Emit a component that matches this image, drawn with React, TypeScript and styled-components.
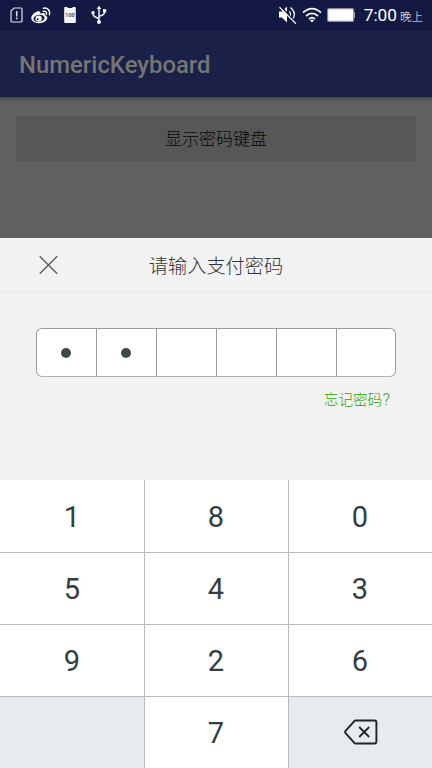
import React from "react";
import styled, { createGlobalStyle } from "styled-components";

const GlobalStyle = createGlobalStyle`
  *, *::before, *::after { box-sizing: border-box; }
  html, body, #root { height: 100%; }
  body {
    margin: 0;
    overflow: hidden;
    font-family: Roboto, "Noto Sans CJK SC", sans-serif;
  }
  button { font-family: inherit; padding: 0; border: 0; background: none; }
`;

const Screen = styled.div`
  width: 432px;
  height: 768px;
  display: flex;
  flex-direction: column;
  background: #616161;
`;

const StatusBar = styled.header`
  height: 30px;
  flex: none;
  display: flex;
  align-items: center;
  justify-content: space-between;
  padding: 0 9px 0 10px;
  background: #131942;
  color: #fff;
`;

const StatusGroup = styled.div`
  display: flex;
  align-items: center;
  height: 30px;
`;

const StatusIcon = styled.svg<{ $gap?: number }>`
  display: block;
  flex: none;
  margin-right: ${(p) => p.$gap ?? 0}px;
`;

const Clock = styled.span`
  padding-top: 2px;
  font-size: 17.3px;
  line-height: 30px;
  white-space: nowrap;
`;

const Period = styled.small`
  margin-left: 3px;
  font-size: 11.5px;
  font-weight: 300;
`;

const AppBar = styled.div`
  height: 67px;
  flex: none;
  display: flex;
  align-items: center;
  padding: 2px 19px 0;
  background: #1a2048;
  box-shadow: 0 1px 4px rgba(0, 0, 0, 0.45);
`;

const AppTitle = styled.h1`
  margin: 0;
  font-size: 23.9px;
  font-weight: 500;
  line-height: 30px;
  color: #757573;
`;

const Content = styled.main`
  height: 141px;
  flex: none;
  padding: 19px 16px 0;
`;

const ShowButton = styled.button`
  display: block;
  width: 100%;
  height: 44px;
  border-radius: 3px;
  background: #575757;
  box-shadow: 0 1px 1px rgba(0, 0, 0, 0.13);
  color: #080808;
  font-size: 17px;
  font-weight: 300;
  line-height: 46px;
`;

const Sheet = styled.section`
  height: 242px;
  flex: none;
  background: #f2f2f2;
`;

const SheetHeader = styled.div`
  height: 55px;
  display: grid;
  grid-template-columns: 96px 1fr 96px;
  align-items: center;
  border-bottom: 1px solid #e8e8e8;
`;

const CloseButton = styled.button`
  display: flex;
  justify-content: center;
`;

const SheetTitle = styled.h2`
  margin: 0;
  padding-top: 4px;
  text-align: center;
  font-size: 19.2px;
  font-weight: 300;
  line-height: 28px;
  color: #2f3538;
`;

const PasswordBox = styled.div`
  height: 49px;
  margin: 35px 36px 0;
  display: grid;
  grid-template-columns: repeat(5, 60px) 1fr;
  border: 1px solid #999c9d;
  border-bottom-color: #adafb0;
  border-radius: 6px;
  background: #fff;
`;

const PasswordCell = styled.div`
  display: flex;
  align-items: center;
  justify-content: center;
  border-right: 1px solid #999c9d;
  &:last-child { border-right: 0; }
`;

const Dot = styled.i`
  width: 10px;
  height: 10px;
  margin-right: 1px;
  border-radius: 50%;
  background: #41484b;
`;

const ForgotRow = styled.div`
  display: flex;
  justify-content: flex-end;
  padding: 13px 42px 0 0;
`;

const ForgotLink = styled.a`
  font-size: 14.6px;
  font-weight: 300;
  line-height: 20px;
  color: #2ba200;
`;

const QuestionMark = styled.span`
  margin-left: 0.5px;
  font-size: 16px;
`;

const Keypad = styled.div`
  height: 288px;
  flex: none;
  display: grid;
  grid-template-columns: 144px 143px 143px;
  grid-template-rows: 72px 71px 71px 71px;
  gap: 1px;
  background: #b8bbbc;
`;

const Key = styled.button<{ $muted?: boolean }>`
  display: flex;
  align-items: center;
  justify-content: center;
  padding-top: 1px;
  padding-right: 1px;
  background: #fff;
  color: #363d40;
  font-size: 29px;
  line-height: 36px;
  &:nth-child(-n + 3) { padding-top: 2px; }
  &:nth-child(3n + 1) { padding-right: 0; }
  ${(p) => p.$muted && "background: #e7ebee; padding: 0 0 2px 1px;"}
`;

const PASSWORD_LENGTH = 6;
const ENTERED = 2;
const KEYS = ["1", "8", "0", "5", "4", "3", "9", "2", "6", "", "7", "delete"];

function SimIcon() {
  return (
    <StatusIcon $gap={8} width="13" height="16" viewBox="0 0 13 16" fill="none" stroke="#e0e1e8" strokeWidth="1.2">
      <path d="M4 1h7q1 0 1 1v12q0 1-1 1H2q-1 0-1-1V4z" />
      <path d="M6.700 4v5.500M6.700 10.600v1.600" strokeWidth="1.500" />
    </StatusIcon>
  );
}

function WeiboIcon() {
  return (
    <StatusIcon $gap={13} width="20" height="18" viewBox="0 0 20 18">
      <path fill="#fff" d="M7.3 5.2C4.3 5.3.3 9 .3 12.1c0 3.2 3.7 5.2 7.6 5.2 4.5 0 8.4-2.8 8.4-5.5 0-1.4-1-2.2-2.4-2.6.5-1.8-.8-2.8-4.7-1.5.6-1.8-.1-2.6-1.9-2.5z" />
      <ellipse cx="8" cy="12.4" rx="5.6" ry="3.6" fill="#131942" transform="rotate(-8 8 12.4)" />
      <circle cx="7.6" cy="12.6" r="3.200" fill="#fff" />
      <circle cx="6.7" cy="13.2" r="1" fill="#131942" />
      <path d="M12.3 5.3c2.3-.5 3.8 1 3.1 3.2M12.4 2.2c4-.8 7.1 2 6 6.5" fill="none" stroke="#fff" strokeWidth="1.4" strokeLinecap="round" />
    </StatusIcon>
  );
}

function BatteryLevelIcon() {
  return (
    <StatusIcon $gap={15} width="12" height="18" viewBox="0 0 12 18">
      <path fill="#f5f5f7" d="M1 1h2.5v1h5V1H11q.8 0 .8.8v14.4q0 .8-.8.8H1q-.8 0-.8-.8V1.800Q.2 1 1 1z" />
      <text x="6" y="11" textAnchor="middle" fontSize="5.4" fontWeight="700" fill="#4b5070">100</text>
    </StatusIcon>
  );
}

function UsbIcon() {
  return (
    <StatusIcon width="16" height="20" viewBox="0 0 16 20" fill="none" stroke="#f0f0f4" strokeWidth="1.5">
      <path d="M8 3v14M8 14.300c0-2-6-1.200-6-5.800M8 12c0-1.600 5.600-.9 5.600-5.600" />
      <path d="M8 .7l2.300 3.300H5.700z" fill="#fff" stroke="none" />
      <circle cx="2" cy="7.600" r="1.700" fill="#fff" stroke="none" />
      <path d="M12 4.200h3.200v3.200H12z" fill="#fff" stroke="none" />
      <circle cx="8" cy="17" r="2" fill="#fff" stroke="none" />
    </StatusIcon>
  );
}

function MutedIcon() {
  return (
    <StatusIcon $gap={4} width="20" height="20" viewBox="0 0 20 20" fill="none" stroke="#f0f0f4" strokeWidth="1.300">
      <path d="M1 6.500h3l5-5v16l-5-5H1z" fill="#fff" stroke="none" />
      <path d="M11.500 6q2 3.500 0 7M12.500 2.500Q19.500 8.500 14 15" />
      <path d="M3.300 1.800L19 19" stroke="#131942" strokeWidth="1.600" />
      <path d="M1.500 2.200l16.500 16.500" />
    </StatusIcon>
  );
}

function WifiIcon() {
  return (
    <StatusIcon $gap={5} width="20" height="16" viewBox="0 0 20 16" fill="none" stroke="#fff" strokeWidth="1.700">
      <path d="M1 5.600q9-8 18 0M4 9q6-5.300 12 0M7 12q3-2.600 6 0" />
      <path d="M8 13.200q2-1.500 4 0l-2 2.300z" fill="#fff" stroke="none" />
    </StatusIcon>
  );
}

function BatteryIcon() {
  return (
    <StatusIcon $gap={9} width="28" height="14" viewBox="0 0 28 14">
      <rect x=".6" y=".6" width="26" height="12.800" rx="1.500" fill="#fff" stroke="#878aa0" strokeWidth="1.200" />
      <path d="M27.500 4v6" stroke="#a6a8b8" />
    </StatusIcon>
  );
}

function CloseIcon() {
  return (
    <svg width="20" height="20" viewBox="0 0 20 20" fill="none" stroke="#53595c" strokeWidth="1.300">
      <path d="M1.700 1.200l17.500 17.500M19.200 1.200L1.700 18.700" />
    </svg>
  );
}

function DeleteIcon() {
  return (
    <svg width="34" height="26" viewBox="0 0 34 26" fill="none" stroke="#202426" strokeWidth="1.900" strokeLinejoin="round">
      <path d="M11.700 1.500h18.800q1.900 0 1.900 1.900v19.200q0 1.900-1.900 1.900H11.700q-.8 0-1.400-.6L1.600 14.200q-1.100-1.200 0-2.400l8.700-9.700q.6-.6 1.400-.6z" />
      <path d="M15.200 8l10 10M25.200 8l-10 10" strokeWidth="1.800" />
    </svg>
  );
}

export default function App() {
  return (
    <>
      <GlobalStyle />
      <Screen>
        <StatusBar>
          <StatusGroup>
            <SimIcon />
            <WeiboIcon />
            <BatteryLevelIcon />
            <UsbIcon />
          </StatusGroup>
          <StatusGroup>
            <MutedIcon />
            <WifiIcon />
            <BatteryIcon />
            <Clock>7:00<Period>晚上</Period></Clock>
          </StatusGroup>
        </StatusBar>
        <AppBar>
          <AppTitle>NumericKeyboard</AppTitle>
        </AppBar>
        <Content>
          <ShowButton>显示密码键盘</ShowButton>
        </Content>
        <Sheet>
          <SheetHeader>
            <CloseButton aria-label="关闭"><CloseIcon /></CloseButton>
            <SheetTitle>请输入支付密码</SheetTitle>
          </SheetHeader>
          <PasswordBox>
            {Array.from({ length: PASSWORD_LENGTH }, (_, i) => (
              <PasswordCell key={i}>{i < ENTERED && <Dot />}</PasswordCell>
            ))}
          </PasswordBox>
          <ForgotRow>
            <ForgotLink>忘记密码<QuestionMark>?</QuestionMark></ForgotLink>
          </ForgotRow>
        </Sheet>
        <Keypad>
          {KEYS.map((key, i) => (
            <Key key={i} $muted={key === "" || key === "delete"}>
              {key === "delete" ? <DeleteIcon /> : key}
            </Key>
          ))}
        </Keypad>
      </Screen>
    </>
  );
}
